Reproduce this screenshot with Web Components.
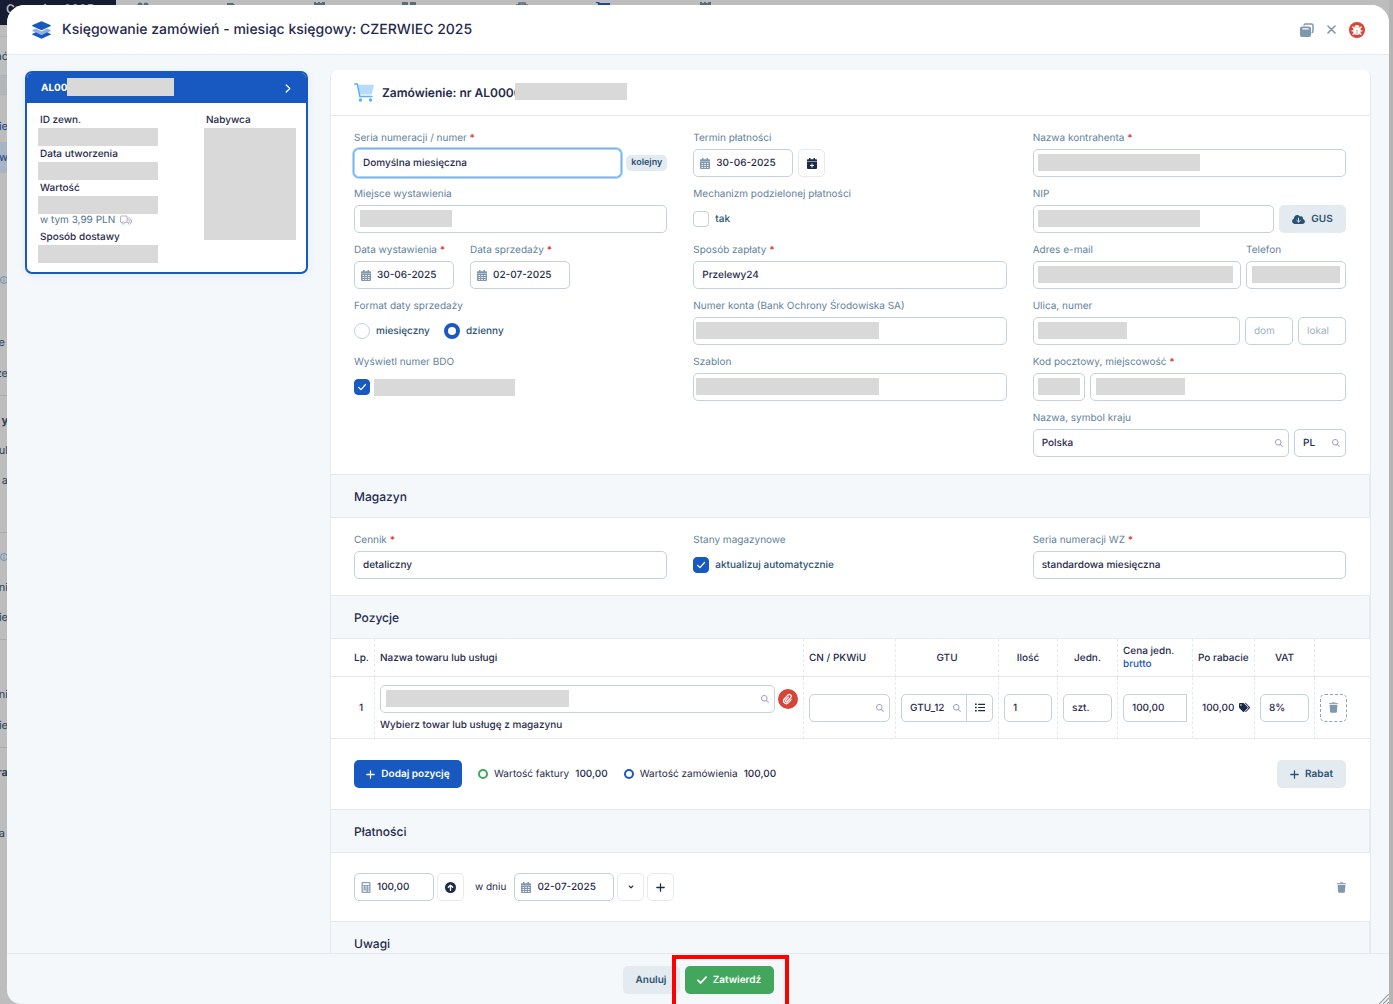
<!DOCTYPE html>
<html lang="pl">
<head>
<meta charset="utf-8">
<meta name="viewport" content="width=device-width, initial-scale=1">
<title>Księgowanie zamówień</title>
<style>
  html, body { margin: 0; height: 100%; }
  body {
    --navy: #1f2a4b; --label: #64829b; --steel: #7f98ad; --line: #e4e9f2; --edge: #c3d2de;
    --soft: #f4f8fb; --blue: #1859c1; --deep: #2a5273; --red: #d54538; --green: #43a65d; --mask: #d9d9d9;
    font-family: Inter, "Liberation Sans", sans-serif; font-size: 10px; line-height: 16px; color: var(--navy);
    text-rendering: geometricPrecision;
    background: #bdbdbd; overflow: hidden;
  }
</style>
</head>
<body>
<booking-app></booking-app>
<script>
const define = (name, markup, setup) => {
  const template = document.createElement('template');
  template.innerHTML = markup;
  customElements.define(name, class extends HTMLElement {
    connectedCallback() {
      if (this.shadowRoot) return;
      const root = this.attachShadow({ mode: 'open' });
      root.append(template.content.cloneNode(true));
      if (setup) setup(this, root);
    }
  });
};

const icons = {
  layers: ['0 0 20 19', '<path fill="#8fb1e6" d="M.6 9.6 4 8l6 2.8L16 8l3.4 1.6c.6.3.6.8 0 1.1L10.6 14.600q-.6.3-1.200 0L.6 10.700c-.6-.3-.6-.8 0-1.100z"/><path d="M.6 4.300 9.400.4q.6-.3 1.200 0l8.800 3.900c.6.300.6.900 0 1.200l-8.800 3.900q-.6.300-1.200 0L.6 5.500c-.6-.3-.6-.9 0-1.200zM.6 13.400 4 11.900l5.400 2.500q.6.300 1.200 0l5.400-2.500 3.400 1.500c.6.300.6.900 0 1.200l-8.800 3.900q-.6.300-1.200 0L.6 14.600c-.6-.3-.6-.9 0-1.200z"/>'],
  cart: ['0 0 20 19', '<path fill="#b5dbff" d="M4.200 1.800H20l-2.200 9.600H6z"/><path fill="none" stroke="#5aaefb" stroke-width="1.500" stroke-linecap="round" stroke-linejoin="round" d="M.8 1h2.500l2.600 12.500h12"/><circle fill="#5aaefb" cx="6.400" cy="17" r="1.700"/><circle fill="#5aaefb" cx="16.500" cy="17" r="1.700"/>'],
  calendar: ['0 0 10 11', '<path d="M2 0h1.500v1.300h3V0H8v1.300h1.200q.8 0 .8.800v1.300H0V2.100q0-.8.800-.8H2z"/><path fill-rule="evenodd" d="M0 3.800h10v6.300q0 .9-.9.900H.9q-.9 0-.9-.9zM1.600 5.100v.9h1.500v-.9zm2.700 0v.9h1.500v-.9zm2.700 0v.9h1.500v-.9zM1.600 7.100v.9h1.500v-.9zm2.700 0v.9h1.500v-.9zm2.700 0v.9h1.500v-.9zM1.600 9.100v.8h1.500v-.8zm2.700 0v.8h1.500v-.8zm2.700 0v.8h1.500v-.8z"/>'],
  calplus: ['0 0 10 11', '<path fill-rule="evenodd" d="M2 0h1.500v1.300h3V0H8v1.300h1.200q.8 0 .8.800v1.300H0V2.100q0-.8.800-.8H2zM0 4h10v6.100q0 .9-.9.900H.9q-.9 0-.9-.9zM4.500 5.500v1.500H3v1h1.500v1.500h1V8H7V7H5.500V5.500z"/>'],
  calc: ['0 0 9 11', '<path fill-rule="evenodd" opacity=".9" d="M1 0h7q1 0 1 1v9q0 1-1 1H1q-1 0-1-1V1q0-1 1-1zm.3 1.300v1.700h6.400V1.300zm0 3v1.200h1.300V4.300zm2.500 0v1.200h1.300V4.300zm2.600 0v1.200h1.300V4.300zM1.300 6.400v1.200h1.300V6.400zm2.500 0v1.200h1.300V6.400zm2.600 0v1.200h1.300V6.400zM1.300 8.500v1.200h3.800V8.500zm5.100 0v1.200h1.300V8.500z"/>'],
  up: ['0 0 12 12', '<circle cx="6" cy="6" r="6"/><path fill="none" stroke="#fff" stroke-width="1.500" stroke-linecap="round" stroke-linejoin="round" d="M6 9V3.500M3.600 5.800 6 3.400l2.400 2.400"/>'],
  search: ['0 0 512 512', '<path d="M416 208c0 45.900-14.900 88.300-40 122.700L502.600 457.400c12.500 12.500 12.500 32.800 0 45.300s-32.800 12.500-45.300 0L330.700 376c-34.400 25.200-76.800 40-122.700 40C93.100 416 0 322.900 0 208S93.100 0 208 0S416 93.100 416 208zM208 352a144 144 0 1 0 0-288 144 144 0 1 0 0 288z"/>'],
  trash: ['0 0 448 512', '<path opacity=".85" d="M135.200 17.700L128 32H32C14.300 32 0 46.300 0 64S14.300 96 32 96H416c17.700 0 32-14.300 32-32s-14.300-32-32-32H320l-7.200-14.300C307.400 6.800 296.300 0 284.200 0H163.800c-12.100 0-23.200 6.800-28.600 17.700z"/><path d="M416 128H32L53.200 467c1.600 25.300 22.600 45 47.900 45H346.900c25.300 0 46.300-19.700 47.900-45L416 128z"/>'],
  check: ['0 0 10 8', '<path fill="none" stroke="currentColor" stroke-width="1.800" stroke-linecap="round" stroke-linejoin="round" d="M1 4.300 3.700 7 9 1.200"/>'],
  tick: ['0 0 10 8', '<path fill="none" stroke="currentColor" stroke-width="1.200" stroke-linecap="round" stroke-linejoin="round" d="M1.500 4.300 4 6.600 8.500 1.500"/>'],
  tags: ['0 0 640 512', '<path d="M497.900 225.900L286.100 14.100A48 48 0 0 0 252.100 0H48C21.500 0 0 21.500 0 48v204.100a48 48 0 0 0 14.100 33.900l211.900 211.900c18.700 18.700 49.100 18.700 67.900 0l204.100-204.100c18.700-18.700 18.700-49.100 0-67.900zM112 160c-26.500 0-48-21.500-48-48s21.500-48 48-48 48 21.500 48 48-21.500 48-48 48zm513.900 133.800L421.800 497.900c-18.700 18.700-49.100 18.700-67.900 0l-.4-.4L527.600 323.500c17-17 26.400-39.600 26.400-63.600s-9.400-46.600-26.400-63.600L331.400 0h48.700a48 48 0 0 1 33.900 14.100l211.900 211.900c18.700 18.700 18.700 49.100 0 67.900z"/>'],
  cloud: ['0 32 640 448', '<path d="M144 480C64.500 480 0 415.500 0 336c0-62.800 40.200-116.200 96.200-135.900c-.1-2.700-.2-5.400-.2-8.100c0-88.400 71.600-160 160-160c59.300 0 111 32.200 138.700 80.200C409.900 102 428.300 96 448 96c53 0 96 43 96 96c0 12.200-2.300 23.800-6.400 34.600C596 238.400 640 290.100 640 352c0 70.700-57.300 128-128 128H144z"/><path fill="none" stroke="#e3eaf0" stroke-width="48" stroke-linecap="round" stroke-linejoin="round" d="M320 190v190m-85-80 85 85 85-85"/>'],
  clip: ['0 0 12 14', '<g transform="rotate(42 6 7)" fill="none" stroke="currentColor" stroke-width="1.500" stroke-linecap="round"><path d="M9.300 5v5a3.300 3.300 0 0 1-6.600 0V3.600a2.300 2.300 0 0 1 4.600 0V10a1.200 1.200 0 0 1-2.400 0V5"/></g>'],
  list: ['0 0 12 10', '<path d="M0 .3h2v1.800H0zM0 4.100h2v1.800H0zM0 7.900h2v1.800H0zM3.800.5H12v1.400H3.800zM3.800 4.300H12v1.400H3.800zM3.800 8.100H12v1.400H3.800z"/>'],
  plus: ['0 0 10 10', '<path fill="none" stroke="currentColor" stroke-width="1.400" stroke-linecap="round" d="M5 .9v8.200M.9 5h8.200"/>'],
  right: ['0 0 6 9', '<path fill="none" stroke="currentColor" stroke-width="1.300" stroke-linecap="round" stroke-linejoin="round" d="M1.200 1 4.800 4.500 1.200 8"/>'],
  down: ['0 0 6 4', '<path fill="none" stroke="currentColor" stroke-width="1.100" stroke-linecap="round" stroke-linejoin="round" d="M1.200 1 3 2.800 4.800 1"/>'],
  truck: ['0 0 12 10', '<g fill="none" stroke="currentColor" stroke-width="1"><path d="M2 7.500H1q-.5 0-.5-.5V1.500Q.5 1 1 1h6v6.500H4.500M7 3h2.300L11.500 5v2.500h-.6M7 7.500h1.200M7 5h4.300"/><circle cx="3.200" cy="8" r="1.200"/><circle cx="9.500" cy="8" r="1.200"/></g>'],
  windows: ['0 0 14 14', '<path fill="none" stroke="currentColor" stroke-width="1.500" d="M4 2.500Q4 1 5.500 1H11.500Q13 1 13 2.500V8Q13 9.700 11.500 9.700"/><path fill-rule="evenodd" d="M2 3.500h7q2 0 2 2V12q0 2-2 2H2q-2 0-2-2V5.500q0-2 2-2zM2.300 5.300v1.200h6.400V5.300z"/>'],
  close: ['0 0 9 9', '<path fill="none" stroke="currentColor" stroke-width="1.600" stroke-linecap="round" d="m1 1 7 7M8 1 1 8"/>'],
  bug: ['0 0 16 16', '<circle cx="8" cy="8" r="8" fill="#d54538"/><g stroke="#fff" fill="none" stroke-width="1.300" stroke-linecap="round"><path d="M5.500 6.800 3.800 5M10.500 6.800 12.200 5M5 8.800H3M11 8.800h2M5.500 10.500l-1.500 1.800M10.500 10.500l1.500 1.800"/></g><path fill="#fff" d="M5.500 5.500a2.500 2.500 0 0 1 5 0zM4.500 5.800h7v3.800a3.500 3.500 0 0 1-7 0z"/><path stroke="#d54538" stroke-width=".6" d="M8 8v4.500"/>'],
  info: ['0 0 10 10', '<g fill="none" stroke="currentColor"><circle cx="5" cy="5" r="4.300"/><path d="M5 4.300v3M5 2.300v1"/></g>'],
  grip: ['0 0 10 10', '<path fill="none" stroke="#9a9fa3" stroke-width="1.200" d="M0 10 10 0M4 10l6-6M8 10l2-2"/>'],
  users: ['0 0 14 6', '<circle cx="4" cy="3" r="2.500"/><circle cx="10" cy="3" r="2.500"/>'],
  doc: ['0 0 12 6', '<path d="M1 1h6l3 3v2H1z"/>'],
  wall: ['0 0 12 6', '<path d="M0 0h2v1h2V0h2v1h2V0h3v6H0z"/>'],
  boxes: ['0 0 14 6', '<path d="M0 0h6v6H0zM8 0h6v6H8z"/>'],
  bag: ['0 0 12 6', '<path fill="none" stroke="currentColor" stroke-width="1.500" d="M0 3h12M3 3V1h6v2"/>'],
  basket: ['0 0 14 6', '<path d="M0 0h3l1 1h10v5H3L1.500 1H0z"/>']
};
define('ui-icon', `<style>:host{display:inline-flex;flex:none}svg{display:block;width:100%;height:100%;fill:currentColor}</style>`, (el, root) => {
  const [box, shape] = icons[el.getAttribute('name')];
  const [w, h] = (el.getAttribute('size') || '12x12').split('x');
  el.style.width = w + 'px'; el.style.height = h + 'px';
  root.innerHTML += `<svg viewBox="${box}" aria-hidden="true">${shape}</svg>`;
});

/* Labelled text box or drop-down; "mask" is "offset,width" of a covering bar. */
define('ui-input', `<style>
  :host{display:flex;flex-direction:column;gap:3px;flex:1;min-width:0;box-sizing:border-box}
  :host([w]){flex:none}
  label{color:var(--label);white-space:nowrap;height:16px}
  b{color:var(--red);font-weight:600}
  .box{position:relative;display:flex;align-items:center}
  input,select{appearance:none;box-sizing:border-box;width:100%;min-width:0;height:28px;margin:0;border:1px solid var(--edge);border-radius:5px;background:#fff;padding:0 8px;font:500 10px/16px Inter,"Liberation Sans",sans-serif;text-rendering:geometricPrecision;color:var(--navy);outline:0}
  input::placeholder{color:#9db2c6;opacity:1;font-weight:400}
  :host([focus]) select{box-shadow:0 0 0 1px #6db5fb,0 0 0 2px #b6dafd}
  :host([lead]) input{padding-left:22px}
  :host([flat]) input{border-top-right-radius:0;border-bottom-right-radius:0}
  .lead{position:absolute;left:7px;color:var(--steel);display:flex}
  .find{position:absolute;right:6px;color:#a3a6c0;display:flex}
  .mask{position:absolute;top:5px;height:17px;background:var(--mask)}
</style><div class="box"></div>`, (el, root) => {
  const a = n => el.getAttribute(n);
  const box = root.querySelector('.box');
  if (a('w')) el.style.width = a('w') + 'px';
  const field = document.createElement(el.hasAttribute('select') ? 'select' : 'input');
  field.id = 'field';
  if (field.tagName === 'SELECT') field.append(new Option(a('value') || ''));
  else { field.type = 'text'; field.value = a('value') || ''; field.placeholder = a('placeholder') || ''; }
  if (a('label')) {
    const label = document.createElement('label');
    label.htmlFor = 'field';
    label.textContent = a('label') + ' ';
    if (el.hasAttribute('required')) label.insertAdjacentHTML('beforeend', '<b>*</b>');
    box.before(label);
  } else field.setAttribute('aria-label', a('name') || a('placeholder') || '');
  box.append(field);
  if (a('lead')) box.insertAdjacentHTML('beforeend', `<span class="lead"><ui-icon name="${a('lead')}" size="10x11"></ui-icon></span>`);
  if (el.hasAttribute('find')) box.insertAdjacentHTML('beforeend', '<span class="find"><ui-icon name="search" size="8x8"></ui-icon></span>');
  if (a('mask')) {
    const [x, w] = a('mask').split(',');
    box.insertAdjacentHTML('beforeend', `<span class="mask" style="left:${x}px;width:${w}px"></span>`);
  }
});

define('ui-group', `<style>
  :host{display:block}.cap{color:var(--label);height:16px}.row{display:flex;align-items:center;height:28px;gap:14px;margin-top:3px}
</style><div class="cap"></div><div class="row"><slot></slot></div>`, (el, root) => {
  root.querySelector('.cap').textContent = el.getAttribute('caption');
  el.setAttribute('role', 'group');
  el.setAttribute('aria-label', el.getAttribute('caption'));
});

define('ui-check', `<style>
  :host{display:inline-flex}
  label{display:flex;align-items:center;gap:6px;font-weight:500;color:var(--deep);position:relative}
  input{appearance:none;box-sizing:border-box;width:16px;height:16px;margin:0;border:1px solid var(--edge);border-radius:4px;background:#fff}
  input[type=radio]{border-radius:50%}
  input[type=checkbox]:checked{background:var(--blue);border-color:var(--blue)}
  input[type=radio]:checked{border:4px solid var(--blue)}
  ui-icon{position:absolute;left:3px;top:4px;color:#fff;pointer-events:none}
  .mask{width:141px;height:17px;background:var(--mask);margin-left:-2px}
</style><label><input><slot></slot></label>`, (el, root) => {
  const input = root.querySelector('input');
  input.type = el.getAttribute('type') || 'checkbox';
  input.checked = el.hasAttribute('checked');
  if (input.checked && input.type === 'checkbox') input.insertAdjacentHTML('afterend', '<ui-icon name="tick" size="10x8"></ui-icon>');
  if (el.hasAttribute('masked')) { input.setAttribute('aria-label', 'Numer BDO'); root.querySelector('label').insertAdjacentHTML('beforeend', '<span class="mask"></span>'); }
});

define('ui-button', `<style>
  :host{display:inline-flex;flex:none}
  button{display:flex;align-items:center;justify-content:center;gap:6px;box-sizing:border-box;width:100%;height:28px;margin:0;padding:0 13px;border:0;border-radius:5px;background:#e3eaf0;color:var(--deep);font:600 10px/16px Inter,"Liberation Sans",sans-serif;text-rendering:geometricPrecision;white-space:nowrap}
  :host([kind=primary]) button{background:var(--blue);color:#fff}
  :host([kind=success]) button{background:var(--green);color:#fff}
  :host([kind=icon]) button{width:27px;padding:0;background:#fff;border:1px solid var(--line);color:var(--navy)}
  :host([kind=list]) button{width:27px;padding:0;background:#fff;border:1px solid var(--edge);border-radius:0 5px 5px 0;margin-left:-1px;color:var(--navy)}
  :host([kind=dashed]) button{width:27px;padding:0;background:#fff;border:1px dashed #8ba3b8;color:var(--steel)}
  :host([kind=plain]) button{height:auto;padding:0;background:none;color:var(--steel)}
  :host([kind=round]) button{width:20px;height:20px;padding:0;border-radius:50%;background:var(--red);color:#fff}
</style><button type="button"><slot></slot></button>`, (el, root) => {
  if (el.getAttribute('name')) root.querySelector('button').setAttribute('aria-label', el.getAttribute('name'));
  if (el.getAttribute('w')) el.style.width = el.getAttribute('w') + 'px';
});

define('form-section', `<style>
  :host{display:block}
  h3{margin:0;height:44px;box-sizing:border-box;padding:0 23px;border:solid var(--line);border-width:1px 1px 1px 0;background:var(--soft);font:500 12px/44px Inter,"Liberation Sans",sans-serif}
</style><h3></h3><slot></slot>`, (el, root) => { root.querySelector('h3').textContent = el.getAttribute('heading'); });

define('order-card', `<style>
  :host{display:block;box-sizing:border-box;flex:none;width:283px;border:2px solid var(--blue);border-radius:7px;background:#fff;overflow:hidden;box-shadow:0 2px 8px #1859c114}
  header{display:flex;align-items:center;height:30px;padding:0 15px 0 14px;background:var(--blue);color:#fff;font-weight:700}
  header i{position:relative;width:107px;height:18px;background:var(--mask);margin:-3px auto 0 0}
  .al{width:26px}
  .cols{display:flex;justify-content:space-between;padding:9px 10px 9px 11px;font-weight:500}
  .cols p{margin:0;padding-left:2px}
  .bar{height:18px;background:var(--mask)}
  .left{width:120px}.right{width:92px}.right .bar{height:112px}
  .left .ship{display:flex;align-items:center;gap:5px;line-height:12px;margin-bottom:3px;color:#52728f;font-weight:400}
  .ship ui-icon{color:#b9b6cc}
</style>
<header><span class="al">AL000</span><i></i><ui-icon name="right" size="6x9"></ui-icon></header>
<div class="cols"><div class="left"><p>ID zewn.</p><div class="bar"></div><p>Data utworzenia</p><div class="bar"></div><p>Wartość</p><div class="bar"></div>
<p class="ship">w tym 3,99 PLN <ui-icon name="truck" size="12x10"></ui-icon></p><p>Sposób dostawy</p><div class="bar"></div></div>
<div class="right"><p>Nabywca</p><div class="bar"></div></div></div>`);

define('items-table', `<style>
  :host{display:block}
  table{width:100%;border-collapse:separate;border-spacing:0;table-layout:fixed;font-weight:500}
  th,td{box-sizing:border-box;padding:0 5px;border-right:1px dashed var(--line);border-bottom:1px solid var(--line);font-size:10px;font-weight:500;text-align:left;white-space:nowrap}
  th:last-child,td:last-child{border-right:0}
  th{height:38px;line-height:13px;padding-top:1px}td{height:62px}
  .c{text-align:center}.lp{padding-left:23px}
  th.lp{padding-right:0}
  td.lp{padding-left:28px}
  a{color:var(--blue);text-decoration:none}
  .row{display:flex;align-items:center}.name{gap:3px;padding-top:2px}
  .hint{display:block;line-height:16px;margin-top:4px}
  .off{display:flex;align-items:center;gap:5px;padding-left:4px}
</style>
<table><colgroup><col style="width:44px"><col><col style="width:92px"><col style="width:103px"><col style="width:59px"><col style="width:60px"><col style="width:75px"><col style="width:62px"><col style="width:60px"><col style="width:55px"></colgroup>
<thead><tr><th class="lp">Lp.</th><th>Nazwa towaru lub usługi</th><th>CN / PKWiU</th><th class="c">GTU</th><th class="c">Ilość</th><th class="c">Jedn.</th><th>Cena jedn.<br><a href="#brutto">brutto</a></th><th>Po rabacie</th><th class="c">VAT</th><th></th></tr></thead>
<tbody><tr><td class="lp">1</td>
<td><div class="row name"><ui-input name="Nazwa towaru" mask="6,183" find></ui-input><ui-button kind="round" name="Załącznik"><ui-icon name="clip" size="10x12"></ui-icon></ui-button></div><span class="hint">Wybierz towar lub usługę z magazynu</span></td>
<td><div class="row"><ui-input name="CN / PKWiU" find></ui-input></div></td>
<td><div class="row"><ui-input name="GTU" value="GTU_12" find flat></ui-input><ui-button kind="list" name="Lista GTU"><ui-icon name="list" size="10x9"></ui-icon></ui-button></div></td>
<td><ui-input name="Ilość" value="1"></ui-input></td>
<td><ui-input name="Jednostka" value="szt."></ui-input></td>
<td><ui-input name="Cena" value="100,00" w="64" flat></ui-input></td>
<td><span class="off">100,00 <ui-icon name="tags" size="11x9"></ui-icon></span></td>
<td><ui-input name="VAT" value="8%"></ui-input></td>
<td><ui-button kind="dashed" name="Usuń pozycję"><ui-icon name="trash" size="9x11"></ui-icon></ui-button></td></tr></tbody></table>`);

define('page-backdrop', `<style>
  :host{display:flex;justify-content:space-between;height:100%;color:#2c4258;background:#bdbdbd;font-size:11px}
  .side{width:116px;display:flex;flex-direction:column}
  .month{height:25px;box-sizing:border-box;background:#161d33;color:#bbb;font-size:12px;font-weight:600;line-height:18px;padding-left:6px}
  .tools{border-top:1px solid #acb1b5;border-bottom:1px solid #acb1b5;margin-top:11px;height:38px;width:8px}
  .sub{height:18px;background:#b3b5b7;border-bottom:1px solid #acb1b5;margin-bottom:7px}
  section{display:flex;flex-direction:column;box-sizing:border-box;padding:9px 0 7px;border-bottom:1px solid #acacac}
  section span,.tools{display:flex;justify-content:flex-end;align-items:center;flex:1;width:8px}
  .tools{flex:none}
  .hi{background:#a6b4c5}.blue{color:#164488}.b{font-weight:700}.i{color:#4f86b8}
  nav{flex:1;display:flex;align-items:flex-start;gap:76px;padding:2px 0 0 20px;color:#5a6b7a}
  .rail{width:4px;background:#b4b4b4}
</style>
<div class="side"><div class="month">Czerwiec 2025</div><div class="tools">ać</div><div class="sub"></div>
<section style="height:294px"><span class="blue">ie</span><span class="hi blue">ów</span><span></span><span></span><span></span><span class="i"><ui-icon name="info" size="8x8"></ui-icon></span><span></span><span>e&nbsp;</span><span>ze</span></section>
<section style="height:137px"><span class="b">y</span><span>ul</span><span>a</span><span></span></section>
<section style="height:107px"><span class="i"><ui-icon name="info" size="8x8"></ui-icon></span><span>ni</span><span>ie</span></section>
<section style="height:108px"><span></span><span>ni</span><span>ie</span></section>
<section style="height:107px;border:0"><span class="b">ra</span><span></span><span>a&nbsp;</span></section></div>
<nav><ui-icon name="users" size="14x6"></ui-icon><ui-icon name="doc" size="12x6"></ui-icon><ui-icon name="wall" size="12x6"></ui-icon><ui-icon name="boxes" size="14x6"></ui-icon><ui-icon name="bag" size="12x6" style="margin-left:24px"></ui-icon><ui-icon name="basket" size="14x6" style="color:#164a9c;margin-left:-8px"></ui-icon><ui-icon name="wall" size="12x6" style="margin-left:14px"></ui-icon></nav>
<div class="rail"></div>`);

define('booking-app', `<style>
  :host{display:block;position:relative;height:100vh;overflow:hidden}
  .modal{position:absolute;inset:5px 4px 0 7px;display:flex;flex-direction:column;border-radius:18px 18px 0 14px;background:var(--soft);overflow:hidden}
  .top{flex:none;display:flex;align-items:center;height:49px;padding:0 24px 0 25px;background:#fff;border-bottom:1px solid var(--line)}
  .top>ui-icon{color:var(--blue)}
  h1{margin:0 auto 0 11px;font-size:14px;line-height:20px;font-weight:500}
  .acts{display:flex;align-items:center;gap:13px}
  .body{flex:1;min-height:0;display:flex;align-items:flex-start;gap:22px;padding:15px 18px 0;overflow:hidden}
  order-card{margin-top:1px}
  .panel{flex:1;min-width:0;background:#fff;border:solid var(--line);border-width:0 1px;border-radius:7px 7px 0 0}
  .title{display:flex;align-items:center;height:45px;padding:0 23px;border-bottom:1px solid var(--line)}
  h2{margin:0 0 0 8px;font-size:12px;line-height:20px;font-weight:600;width:133px;white-space:nowrap}
  .title i{position:relative;width:112px;height:17px;background:var(--mask);margin-top:-2px}
  .cols{display:grid;grid-template-columns:repeat(3,minmax(0,1fr));gap:26px;padding:14px 24px 17px 23px}
  .cols.short{padding:14px 24px 16px 23px}
  .col{display:flex;flex-direction:column;gap:9px}
  .row{display:flex;align-items:flex-end;gap:5px}
  .wide{gap:16px}
  .badge{padding:0 5px;margin-bottom:6px;border-radius:5px;background:#e3eaf0;color:var(--deep);font-size:9px;font-weight:600}
  .bar{display:flex;align-items:center;padding:21px 24px 21px 23px}
  .bar.pay{padding:20px 24px 20px 23px}
  .sum{display:flex;align-items:center;gap:6px;margin-left:16px}
  .sum strong{font-weight:500}
  .ring{width:6px;height:6px;border:2px solid var(--green);border-radius:50%}
  .ring.o{border-color:var(--blue)}
  .end{margin-left:auto}
  .foot{flex:none;position:relative;display:flex;justify-content:center;gap:5px;height:51px;padding:12px 0 0;box-sizing:border-box;border-top:1px solid var(--line)}
  .foot .spot{position:relative}
  .mark{position:absolute;inset:-11px -15px -8px -13px;border:4px solid #f00;pointer-events:none}
  .grip{position:absolute;right:0;bottom:0}
</style>
<page-backdrop></page-backdrop>
<div class="modal">
  <div class="top"><ui-icon name="layers" size="19x18"></ui-icon><h1>Księgowanie zamówień - miesiąc księgowy: CZERWIEC 2025</h1>
    <div class="acts"><ui-button kind="plain" name="Okna"><ui-icon name="windows" size="14x14"></ui-icon></ui-button><ui-button kind="plain" name="Zamknij"><ui-icon name="close" size="9x9"></ui-icon></ui-button><ui-button kind="plain" name="Zgłoś błąd"><ui-icon name="bug" size="16x16"></ui-icon></ui-button></div></div>
  <div class="body">
    <order-card></order-card>
    <div class="panel">
      <div class="title"><ui-icon name="cart" size="20x19"></ui-icon><h2>Zamówienie: nr AL0000</h2><i></i></div>
      <div class="cols">
        <div class="col">
          <div class="row"><ui-input label="Seria numeracji / numer" required select focus value="Domyślna miesięczna"></ui-input><span class="badge">kolejny</span></div>
          <ui-input style="flex:none" label="Miejsce wystawienia" mask="6,92"></ui-input>
          <div class="row wide"><ui-input w="100" lead="calendar" label="Data wystawienia" required value="30-06-2025"></ui-input><ui-input w="100" lead="calendar" label="Data sprzedaży" required value="02-07-2025"></ui-input></div>
          <ui-group caption="Format daty sprzedaży"><ui-check type="radio">miesięczny</ui-check><ui-check type="radio" checked>dzienny</ui-check></ui-group>
          <ui-group caption="Wyświetl numer BDO"><ui-check checked masked></ui-check></ui-group>
        </div>
        <div class="col">
          <div class="row"><ui-input w="100" lead="calendar" label="Termin płatności" value="30-06-2025"></ui-input><ui-button kind="icon" name="Wybierz termin"><ui-icon name="calplus" size="10x11"></ui-icon></ui-button></div>
          <ui-group caption="Mechanizm podzielonej płatności"><ui-check>tak</ui-check></ui-group>
          <ui-input style="flex:none" label="Sposób zapłaty" required select value="Przelewy24"></ui-input>
          <ui-input style="flex:none" label="Numer konta (Bank Ochrony Środowiska SA)" select mask="3,183"></ui-input>
          <ui-input style="flex:none" label="Szablon" select mask="3,183"></ui-input>
        </div>
        <div class="col">
          <ui-input style="flex:none" label="Nazwa kontrahenta" required mask="5,162"></ui-input>
          <div class="row"><ui-input label="NIP" mask="5,162"></ui-input><ui-button w="67"><ui-icon name="cloud" size="13x9"></ui-icon>GUS</ui-button></div>
          <div class="row"><ui-input label="Adres e-mail" mask="5,195"></ui-input><ui-input w="100" label="Telefon" mask="6,88"></ui-input></div>
          <div class="row"><ui-input label="Ulica, numer" mask="5,89"></ui-input><ui-input w="48" placeholder="dom"></ui-input><ui-input w="48" placeholder="lokal"></ui-input></div>
          <div class="row"><ui-input w="52" label="Kod pocztowy, miejscowość" required mask="5,42"></ui-input><ui-input name="Miejscowość" mask="6,89"></ui-input></div>
          <div class="row"><ui-input label="Nazwa, symbol kraju" value="Polska" find></ui-input><ui-input w="52" name="Symbol kraju" value="PL" find></ui-input></div>
        </div>
      </div>
      <form-section heading="Magazyn"><div class="cols short">
        <ui-input label="Cennik" required select value="detaliczny"></ui-input>
        <ui-group caption="Stany magazynowe"><ui-check checked>aktualizuj automatycznie</ui-check></ui-group>
        <ui-input label="Seria numeracji WZ" required select value="standardowa miesięczna"></ui-input>
      </div></form-section>
      <form-section heading="Pozycje"><items-table></items-table>
        <div class="bar"><ui-button kind="primary" w="108"><ui-icon name="plus" size="9x9"></ui-icon>Dodaj pozycję</ui-button>
          <span class="sum"><span class="ring"></span>Wartość faktury <strong>100,00</strong></span><span class="sum"><span class="ring o"></span>Wartość zamówienia <strong>100,00</strong></span>
          <ui-button class="end" w="69"><ui-icon name="plus" size="9x9"></ui-icon>Rabat</ui-button></div>
      </form-section>
      <form-section heading="Płatności">
        <div class="bar pay"><ui-input w="80" lead="calc" name="Kwota" value="100,00"></ui-input><ui-button style="margin-left:3px" kind="icon" name="Uzupełnij"><ui-icon name="up" size="11x11"></ui-icon></ui-button><span style="margin:0 8px 0 11px">w dniu</span><ui-input w="100" lead="calendar" name="Data płatności" value="02-07-2025"></ui-input><ui-button style="margin:0 3px 0 3px" kind="icon" name="Rozwiń"><ui-icon name="down" size="6x4"></ui-icon></ui-button><ui-button kind="icon" name="Dodaj płatność"><ui-icon name="plus" size="9x9"></ui-icon></ui-button><ui-button class="end" kind="plain" name="Usuń płatność"><ui-icon name="trash" size="9x11"></ui-icon></ui-button></div>
      </form-section>
      <form-section heading="Uwagi"></form-section>
    </div>
  </div>
  <div class="foot"><ui-button w="57">Anuluj</ui-button><div class="spot"><ui-button kind="success" w="89"><ui-icon name="check" size="10x8"></ui-icon>Zatwierdź</ui-button><span class="mark"></span></div><ui-icon class="grip" name="grip" size="10x10"></ui-icon></div>
</div>`);
</script>
</body>
</html>
